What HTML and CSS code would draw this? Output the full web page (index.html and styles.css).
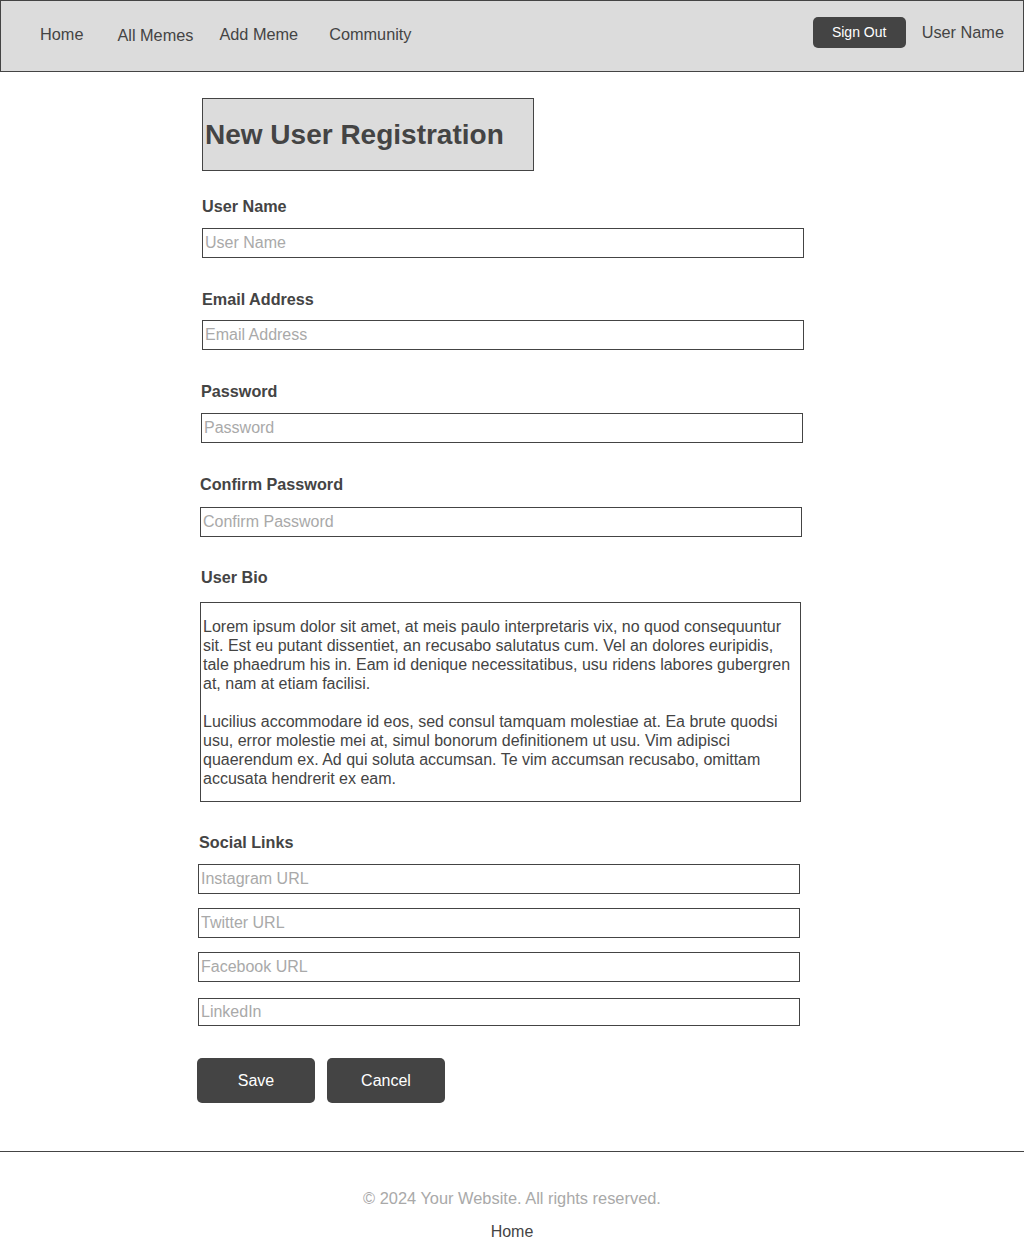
FILE: index.html
```html
<!DOCTYPE html>
<html lang="en">
<head>
<meta charset="utf-8">
<title>New User Registration</title>
<link rel="stylesheet" href="styles.css">
</head>
<body>
<header class="topbar">
  <nav class="nav">
    <a class="nav-link nav-home" href="#">Home</a>
    <a class="nav-link nav-all" href="#">All Memes</a>
    <a class="nav-link nav-add" href="#">Add Meme</a>
    <a class="nav-link" href="#">Community</a>
  </nav>
  <div class="account">
    <button class="signout" type="button">Sign Out</button>
    <span class="account-name">User Name</span>
  </div>
</header>

<main class="content">
  <div class="title-box"><h1>New User Registration</h1></div>

  <form class="form">
    <label class="label label-first">User Name</label>
    <input class="field" type="text" placeholder="User Name">

    <label class="label">Email Address</label>
    <input class="field field-tight" type="text" placeholder="Email Address">

    <label class="label shift-1">Password</label>
    <input class="field shift-1" type="password" placeholder="Password">

    <label class="label shift-2">Confirm Password</label>
    <input class="field shift-2 field-loose" type="password" placeholder="Confirm Password">

    <label class="label shift-1 label-bio">User Bio</label>
    <div class="bio shift-2">
      <p>Lorem ipsum dolor sit amet, at meis paulo interpretaris vix, no quod consequuntur sit. Est eu putant dissentiet, an recusabo salutatus cum. Vel an dolores euripidis, tale phaedrum his in. Eam id denique necessitatibus, usu ridens labores gubergren at, nam at etiam facilisi.</p>
      <p>Lucilius accommodare id eos, sed consul tamquam molestiae at. Ea brute quodsi usu, error molestie mei at, simul bonorum definitionem ut usu. Vim adipisci quaerendum ex. Ad qui soluta accumsan. Te vim accumsan recusabo, omittam accusata hendrerit ex eam.</p>
    </div>

    <label class="label label-social shift-3">Social Links</label>
    <div class="socials shift-4">
      <input class="field" type="text" placeholder="Instagram URL">
      <input class="field" type="text" placeholder="Twitter URL">
      <input class="field" type="text" placeholder="Facebook URL">
      <input class="field field-short" type="text" placeholder="LinkedIn">
    </div>

    <div class="actions shift-5">
      <button class="btn" type="button">Save</button>
      <button class="btn" type="button">Cancel</button>
    </div>
  </form>
</main>

<footer class="footer">
  <p class="copyright">© 2024 Your Website. All rights reserved.</p>
  <a class="footer-link" href="#">Home</a>
</footer>
</body>
</html>
```

FILE: styles.css
```css
* { box-sizing: border-box; }

body {
  margin: 0;
  font-family: "Liberation Sans", Arial, sans-serif;
  color: #444;
  background: #fff;
}

a { color: #444; text-decoration: none; }

.topbar {
  height: 72px;
  background: #dcdcdc;
  border: 1px solid #444;
  display: flex;
  justify-content: space-between;
  align-items: flex-start;
}

.nav {
  display: flex;
  padding-left: 39px;
  padding-top: 24px;
}

.nav-link {
  font-size: 16.3px;
  line-height: 18px;
}

.nav-home { margin-right: 34px; }
.nav-all { margin-right: 26px; margin-top: 1px; }
.nav-add { margin-right: 31px; }

.account {
  display: flex;
  align-items: center;
  gap: 16px;
  padding-top: 16px;
  padding-right: 19px;
}

.signout {
  width: 93px;
  height: 31px;
  border: 0;
  border-radius: 5px;
  background: #444;
  color: #fff;
  font-family: "Liberation Sans", Arial, sans-serif;
  font-size: 14px;
  padding: 0 0 1px;
}

.account-name {
  font-size: 16.3px;
  line-height: 18px;
  margin-top: -1px;
}

.content {
  padding-left: 202px;
  padding-top: 26px;
}

.title-box {
  width: 332px;
  height: 73px;
  background: #dcdcdc;
  border: 1px solid #444;
  display: flex;
  align-items: center;
  padding-left: 2px;
}

.title-box h1 {
  margin: 0;
  font-size: 28px;
  line-height: 32px;
  font-weight: bold;
}

.form {
  display: flex;
  flex-direction: column;
  align-items: flex-start;
}

.label {
  font-size: 16.2px;
  line-height: 18px;
  font-weight: bold;
  margin-top: 32px;
  margin-bottom: 13px;
}

.label-first { margin-top: 26px; }
.label-bio { margin-top: 31px; margin-bottom: 16px; }
.label-social { margin-top: 31px; margin-bottom: 13px; }

.field {
  width: 602px;
  height: 30px;
  border: 1px solid #444;
  background: #fff;
  padding: 0 2px;
  font-family: "Liberation Sans", Arial, sans-serif;
  font-size: 16px;
  color: #444;
  outline: none;
  margin: 0;
}

.field::placeholder { color: #a9a9a9; opacity: 1; }

.field-tight { margin-top: -1px; }
.field-loose { margin-top: 1px; }
.field-short { height: 28px; margin-top: 2px; }

.shift-1 { margin-left: -1px; }
.shift-2 { margin-left: -2px; }
.shift-3 { margin-left: -3px; }
.shift-4 { margin-left: -4px; }
.shift-5 { margin-left: -5px; }

.bio {
  width: 601px;
  height: 200px;
  border: 1px solid #444;
  padding: 14px 4px 0 2px;
  font-size: 16px;
  line-height: 19px;
}

.bio p { margin: 0; }
.bio p + p { margin-top: 19px; }

.socials {
  display: flex;
  flex-direction: column;
  gap: 14px;
}

.actions {
  display: flex;
  gap: 12px;
  margin-top: 32px;
}

.btn {
  width: 118px;
  height: 45px;
  border: 0;
  border-radius: 5px;
  background: #444;
  color: #fff;
  font-family: "Liberation Sans", Arial, sans-serif;
  font-size: 16px;
  padding: 0;
}

.footer {
  margin-top: 48px;
  border-top: 1px solid #444;
  text-align: center;
  padding-top: 37px;
  padding-bottom: 13px;
}

.copyright {
  margin: 0;
  font-size: 16.4px;
  line-height: 18px;
  color: #a9a9a9;
}

.footer-link {
  display: inline-block;
  margin-top: 16px;
  font-size: 16px;
  line-height: 18px;
}
```
